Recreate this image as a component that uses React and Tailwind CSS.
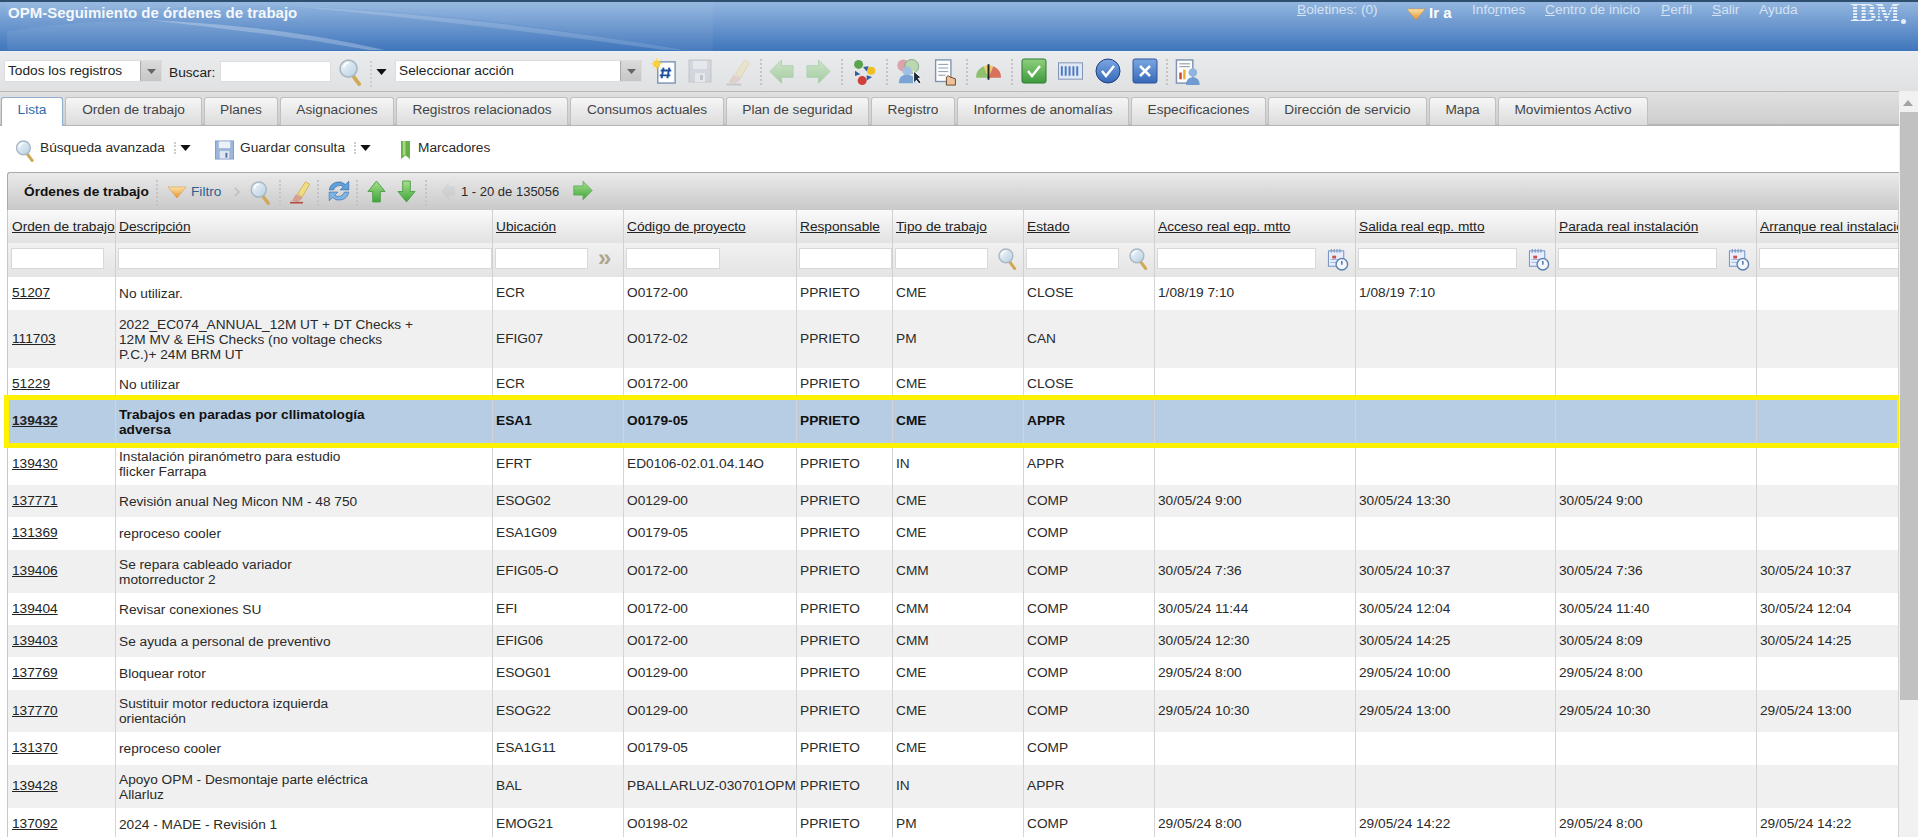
import { Fragment } from 'react'

const gridCols = 'grid-cols-[108px_377px_131px_173px_96px_131px_131px_201px_200px_201px_142px]'

const columns = [
  'Orden de trabajo', 'Descripción', 'Ubicación', 'Código de proyecto', 'Responsable', 'Tipo de trabajo',
  'Estado', 'Acceso real eqp. mtto', 'Salida real eqp. mtto', 'Parada real instalación', 'Arranque real instalación',
]

const rows = [
  { h: 'h-[33px]', id: '51207', desc: ['No utilizar.'], loc: 'ECR', proj: 'O0172-00', type: 'CME', state: 'CLOSE', d1: '1/08/19 7:10', d2: '1/08/19 7:10' },
  { h: 'h-[58px]', id: '111703', alt: true, desc: ['2022_EC074_ANNUAL_12M UT + DT Checks +', '12M MV & EHS Checks (no voltage checks', 'P.C.)+ 24M BRM UT'], loc: 'EFIG07', proj: 'O0172-02', type: 'PM', state: 'CAN' },
  { h: 'h-[32px]', id: '51229', desc: ['No utilizar'], loc: 'ECR', proj: 'O0172-00', type: 'CME', state: 'CLOSE' },
  { h: 'h-[43px]', id: '139432', selected: true, desc: ['Trabajos en paradas por cllimatología', 'adversa'], loc: 'ESA1', proj: 'O0179-05', type: 'CME', state: 'APPR' },
  { h: 'h-[42px]', id: '139430', desc: ['Instalación piranómetro para estudio', 'flicker Farrapa'], loc: 'EFRT', proj: 'ED0106-02.01.04.14O', type: 'IN', state: 'APPR' },
  { h: 'h-[32px]', id: '137771', alt: true, desc: ['Revisión anual Neg Micon NM - 48 750'], loc: 'ESOG02', proj: 'O0129-00', type: 'CME', state: 'COMP', d1: '30/05/24 9:00', d2: '30/05/24 13:30', d3: '30/05/24 9:00' },
  { h: 'h-[33px]', id: '131369', desc: ['reproceso cooler'], loc: 'ESA1G09', proj: 'O0179-05', type: 'CME', state: 'COMP' },
  { h: 'h-[43px]', id: '139406', alt: true, desc: ['Se repara cableado variador', 'motorreductor 2'], loc: 'EFIG05-O', proj: 'O0172-00', type: 'CMM', state: 'COMP', d1: '30/05/24 7:36', d2: '30/05/24 10:37', d3: '30/05/24 7:36', d4: '30/05/24 10:37' },
  { h: 'h-[32px]', id: '139404', desc: ['Revisar conexiones SU'], loc: 'EFI', proj: 'O0172-00', type: 'CMM', state: 'COMP', d1: '30/05/24 11:44', d2: '30/05/24 12:04', d3: '30/05/24 11:40', d4: '30/05/24 12:04' },
  { h: 'h-[32px]', id: '139403', alt: true, desc: ['Se ayuda a personal de preventivo'], loc: 'EFIG06', proj: 'O0172-00', type: 'CMM', state: 'COMP', d1: '30/05/24 12:30', d2: '30/05/24 14:25', d3: '30/05/24 8:09', d4: '30/05/24 14:25' },
  { h: 'h-[33px]', id: '137769', desc: ['Bloquear rotor'], loc: 'ESOG01', proj: 'O0129-00', type: 'CME', state: 'COMP', d1: '29/05/24 8:00', d2: '29/05/24 10:00', d3: '29/05/24 8:00' },
  { h: 'h-[42px]', id: '137770', alt: true, desc: ['Sustituir motor reductora izquierda', 'orientación'], loc: 'ESOG22', proj: 'O0129-00', type: 'CME', state: 'COMP', d1: '29/05/24 10:30', d2: '29/05/24 13:00', d3: '29/05/24 10:30', d4: '29/05/24 13:00' },
  { h: 'h-[33px]', id: '131370', desc: ['reproceso cooler'], loc: 'ESA1G11', proj: 'O0179-05', type: 'CME', state: 'COMP' },
  { h: 'h-[43px]', id: '139428', alt: true, desc: ['Apoyo OPM - Desmontaje parte eléctrica', 'Allarluz'], loc: 'BAL', proj: 'PBALLARLUZ-030701OPM', type: 'IN', state: 'APPR' },
  { h: 'h-[32px]', id: '137092', desc: ['2024 - MADE - Revisión 1'], loc: 'EMOG21', proj: 'O0198-02', type: 'PM', state: 'COMP', d1: '29/05/24 8:00', d2: '29/05/24 14:22', d3: '29/05/24 8:00', d4: '29/05/24 14:22' },
]

const tabs = [
  ['Lista', 'w-[62px]'], ['Orden de trabajo', 'w-[137px]'], ['Planes', 'w-[74px]'], ['Asignaciones', 'w-[114px]'],
  ['Registros relacionados', 'w-[172px]'], ['Consumos actuales', 'w-[154px]'], ['Plan de seguridad', 'w-[143px]'],
  ['Registro', 'w-[84px]'], ['Informes de anomalías', 'w-[172px]'], ['Especificaciones', 'w-[135px]'],
  ['Dirección de servicio', 'w-[159px]'], ['Mapa', 'w-[67px]'], ['Movimientos Activo', 'w-[150px]'],
]

// gradientes compartidos por los iconos
const SvgDefs = () => (
  <svg className="absolute w-0 h-0">
    <defs>
      <linearGradient id="lens" x1="0" y1="0" x2="1" y2="1">
        <stop offset="0" stopColor="#f4f8fb" />
        <stop offset="1" stopColor="#b5cfe2" />
      </linearGradient>
      <linearGradient id="green" x1="0" y1="0" x2="0" y2="1">
        <stop offset="0" stopColor="#a6e08c" />
        <stop offset="1" stopColor="#3fa53a" />
      </linearGradient>
      <linearGradient id="funnel" x1="0" y1="0" x2="0" y2="1">
        <stop offset="0" stopColor="#fbe3a6" />
        <stop offset="1" stopColor="#e5912b" />
      </linearGradient>
      <linearGradient id="checkbox" x1="0" y1="0" x2="0" y2="1">
        <stop offset="0" stopColor="#8fd07e" />
        <stop offset="1" stopColor="#3d9a3c" />
      </linearGradient>
      <linearGradient id="bluebox" x1="0" y1="0" x2="0" y2="1">
        <stop offset="0" stopColor="#7ba7e2" />
        <stop offset="1" stopColor="#3568b8" />
      </linearGradient>
    </defs>
  </svg>
)

const Magnifier = ({ className }) => (
  <svg viewBox="0 0 24 28" className={className}>
    <path d="M15 18 L21 26" stroke="#cfa956" strokeWidth="4" strokeLinecap="round" />
    <circle cx="10" cy="10" r="8.8" fill="url(#lens)" stroke="#a9b8c4" strokeWidth="1.8" />
    <path d="M5 9 a5.5 5.5 0 0 1 5 -5" stroke="#fff" strokeWidth="1.6" fill="none" />
  </svg>
)

const Funnel = ({ className }) => (
  <svg viewBox="0 0 18 12" className={className}>
    <path d="M0 1 H18 L9 12 Z" fill="url(#funnel)" stroke="#d98e30" strokeWidth="0.5" />
  </svg>
)

const Brush = ({ className, faded }) => (
  <svg viewBox="0 0 24 28" className={className} opacity={faded ? 0.3 : 1}>
    <path d="M10 16 L19 2 L24 5 L15 20 Z" fill="#f0dc86" stroke="#cfb04f" />
    <path d="M8 17 L15 21 L10 25 L4 24 Z" fill="#dca08e" stroke="#c07f6f" strokeWidth="0.5" />
    <path d="M1 26.5 H16" stroke={faded ? '#888' : '#b5503f'} strokeWidth="2" />
  </svg>
)

const ArrowLeft = ({ faded }) => (
  <svg viewBox="0 0 26 26" className="w-[25px] h-[25px]" opacity={faded ? 0.38 : 1}>
    <path d="M1 13 L13 1 V7 H25 V19 H13 V25 Z" fill="url(#green)" stroke="#5aa85a" strokeLinejoin="round" />
  </svg>
)

const ArrowRight = ({ className = 'w-[25px] h-[25px]', faded }) => (
  <svg viewBox="0 0 26 26" className={className} opacity={faded ? 0.38 : 1}>
    <path d="M25 13 L13 1 V7 H1 V19 H13 V25 Z" fill="url(#green)" stroke="#5aa85a" strokeLinejoin="round" />
  </svg>
)

const ArrowUp = () => (
  <svg viewBox="0 0 20 24" className="w-[19px] h-[23px]">
    <path d="M10 1 L19 12 H14 V23 H6 V12 H1 Z" fill="url(#green)" stroke="#4d9f48" strokeLinejoin="round" />
  </svg>
)

const ArrowDown = () => (
  <svg viewBox="0 0 20 24" className="w-[19px] h-[23px]">
    <path d="M10 23 L19 12 H14 V1 H6 V12 H1 Z" fill="url(#green)" stroke="#4d9f48" strokeLinejoin="round" />
  </svg>
)

const Caret = () => (
  <svg viewBox="0 0 12 7" className="w-[11px] h-[6px]"><path d="M0 0 H12 L6 7 Z" fill="#111" /></svg>
)

const Dots = () => <span className="block h-[26px] border-l-2 border-dotted border-[#c4c4c4]" />

const SelectArrow = () => (
  <span className="absolute right-0 top-0 w-[21px] h-[20px] bg-gradient-to-b from-[#dadada] to-[#c6c6c6] border-l border-[#aaa] flex items-center justify-center">
    <svg viewBox="0 0 9 5" className="w-[9px] h-[5px]"><path d="M0 0 H9 L4.5 5 Z" fill="#666" /></svg>
  </span>
)

const CalendarClock = () => (
  <svg viewBox="0 0 22 24" className="w-[22px] h-[23px]">
    <rect x="1" y="3" width="16" height="16" fill="#e8eefc" stroke="#6f8fc0" />
    <path d="M4 1 V5 M7 1 V5 M10 1 V5 M13 1 V5" stroke="#6f8fc0" />
    <rect x="5" y="8" width="4" height="3" fill="#d05050" />
    <path d="M3 12 H15 M3 15 H15" stroke="#9db4d8" />
    <circle cx="15" cy="17" r="6" fill="#f4f7fb" stroke="#5f83b3" strokeWidth="1.5" />
    <path d="M15 13.5 V17.5" stroke="#4a6f9f" strokeWidth="1.5" />
  </svg>
)

function MainToolbar() {
  return (
    <div className="h-[40px] bg-gradient-to-b from-[#e9ebed] to-[#dfe1e3] border-t border-[#e9f0f8] relative">
      <div className="absolute left-[4px] top-[8px] w-[158px] h-[22px] bg-white border border-[#ddd] flex items-center pl-[3px] text-[#222]">
        Todos los registros
        <SelectArrow />
      </div>
      <span className="absolute left-[169px] top-[11px] text-[#222]">Buscar:</span>
      <div className="absolute left-[220px] top-[9px] w-[111px] h-[21px] bg-white border border-[#ddd]" />
      <Magnifier className="absolute left-[337px] top-[7px] w-[27px] h-[27px]" />
      <span className="absolute left-[370px] top-[9px] opacity-70"><Dots /></span>
      <span className="absolute left-[376px] top-[17px]"><Caret /></span>
      <div className="absolute left-[395px] top-[8px] w-[247px] h-[22px] bg-white border border-[#ddd] flex items-center pl-[3px] text-[#222]">
        Seleccionar acción
        <SelectArrow />
      </div>

      {/* nueva orden */}
      <svg viewBox="0 0 28 28" className="absolute left-[651px] top-[6px] w-[27px] h-[27px]">
        <rect x="7" y="4" width="18" height="22" fill="#fff" stroke="#7f95b8" strokeWidth="1.5" />
        <path d="M13 10 L11 21 M19 10 L17 21 M10 13 H21 M9 18 H20" stroke="#1f4f9f" strokeWidth="2" />
        <circle cx="6" cy="6" r="3.5" fill="#f9c81f" />
        <path d="M6 0 V12 M0 6 H12 M2 2 L10 10 M10 2 L2 10" stroke="#f9d54a" strokeWidth="1" />
      </svg>
      {/* guardar */}
      <svg viewBox="0 0 24 24" className="absolute left-[688px] top-[7px] w-[24px] h-[24px]" opacity="0.6">
        <rect x="1" y="1" width="22" height="22" fill="#c8ced6" stroke="#a9b2bd" />
        <rect x="5" y="2" width="14" height="8" fill="#e7eaee" />
        <rect x="7" y="14" width="10" height="9" fill="#e7eaee" />
        <rect x="12" y="16" width="3" height="5" fill="#a9b2bd" />
      </svg>
      <Brush faded className="absolute left-[724px] top-[6px] w-[27px] h-[28px]" />
      <span className="absolute left-[760px] top-[7px]"><Dots /></span>
      <span className="absolute left-[769px] top-[7px]"><ArrowLeft faded /></span>
      <span className="absolute left-[806px] top-[7px]"><ArrowRight faded /></span>
      <span className="absolute left-[841px] top-[7px]"><Dots /></span>
      {/* flujo */}
      <svg viewBox="0 0 26 30" className="absolute left-[851px] top-[7px] w-[26px] h-[27px]">
        <circle cx="7" cy="6" r="5" fill="#5aa450" />
        <circle cx="21" cy="13" r="4.5" fill="#f0c020" />
        <circle cx="11" cy="24" r="5" fill="#d0403a" />
        <path d="M12 9 L18 8 L16 14 Z" fill="#2f5f9f" />
        <path d="M3 13 L9 17 L3 19 Z" fill="#2f5f9f" />
        <path d="M22 20 L16 24 L16 18 Z" fill="#2f5f9f" />
      </svg>
      <span className="absolute left-[886px] top-[7px]"><Dots /></span>
      {/* personas */}
      <svg viewBox="0 0 28 30" className="absolute left-[895px] top-[6px] w-[26px] h-[28px]">
        <circle cx="9" cy="8" r="6.5" fill="#dba3aa" />
        <circle cx="18" cy="9" r="7.5" fill="#bcd6b0" stroke="#7fa88a" />
        <circle cx="13" cy="14" r="5" fill="#9fc0e4" />
        <path d="M4 27 Q4 18 13 18 Q22 18 22 27 Z" fill="#7aa3d6" />
        <path d="M20 14 L20 27 L23 24 L26 28 L28 26 L25 22 L28 21 Z" fill="#1f2a3a" stroke="#fff" />
      </svg>
      {/* documento */}
      <svg viewBox="0 0 24 30" className="absolute left-[934px] top-[7px] w-[23px] h-[27px]">
        <rect x="1" y="1" width="17" height="24" fill="#fdfdfd" stroke="#7f93b0" strokeWidth="1.5" />
        <path d="M4 6 H15 M4 10 H15 M4 14 H15 M4 18 H12" stroke="#7f8fa6" />
        <path d="M13 29 V20 Q15 17 17 20 L23 22 V29 Z" fill="#f0c09a" stroke="#5f3f20" />
      </svg>
      <span className="absolute left-[966px] top-[7px]"><Dots /></span>
      {/* indicador */}
      <svg viewBox="0 0 28 18" className="absolute left-[975px] top-[10px] w-[27px] h-[18px]">
        <path d="M1 16 A13 13 0 0 1 9 4 L14 16 Z" fill="#8fc06f" />
        <path d="M9 4 A13 13 0 0 1 19 4 L14 16 Z" fill="#eccb6a" />
        <path d="M19 4 A13 13 0 0 1 27 16 L14 16 Z" fill="#d8705a" />
        <path d="M14 2 V18" stroke="#222" strokeWidth="2" />
      </svg>
      <span className="absolute left-[1011px] top-[7px]"><Dots /></span>
      <svg viewBox="0 0 26 26" className="absolute left-[1021px] top-[6px] w-[26px] h-[26px]">
        <rect x="1" y="1" width="24" height="24" rx="2" fill="url(#checkbox)" stroke="#2f7a32" />
        <path d="M7 13 L11 18 L19 8" stroke="#fff" strokeWidth="2.5" fill="none" />
      </svg>
      <svg viewBox="0 0 26 18" className="absolute left-[1058px] top-[10px] w-[25px] h-[18px]">
        <rect x="0.5" y="0.5" width="25" height="17" fill="#dfe7f4" stroke="#7f93b3" />
        <path d="M4 4 V14 M8 4 V14 M12 4 V14 M16 4 V14 M20 4 V14" stroke="#4a78c2" strokeWidth="2" />
      </svg>
      <svg viewBox="0 0 26 26" className="absolute left-[1095px] top-[6px] w-[26px] h-[26px]">
        <circle cx="13" cy="13" r="12" fill="url(#bluebox)" stroke="#1f3f7f" />
        <path d="M7 13 L11 18 L19 8" stroke="#fff" strokeWidth="2.5" fill="none" />
      </svg>
      <svg viewBox="0 0 26 26" className="absolute left-[1132px] top-[6px] w-[26px] h-[26px]">
        <rect x="1" y="1" width="24" height="24" rx="2" fill="url(#bluebox)" stroke="#2f559f" />
        <path d="M8 8 L18 18 M18 8 L8 18" stroke="#fff" strokeWidth="2.5" />
      </svg>
      <span className="absolute left-[1166px] top-[7px]"><Dots /></span>
      <svg viewBox="0 0 26 28" className="absolute left-[1175px] top-[7px] w-[26px] h-[27px]">
        <rect x="1" y="1" width="17" height="24" fill="#fdfdfd" stroke="#7f93b0" strokeWidth="1.5" />
        <path d="M4 5 H15 M4 8 H15" stroke="#7f8fa6" />
        <rect x="4" y="14" width="2.5" height="7" fill="#d0402a" />
        <rect x="8" y="11" width="2.5" height="10" fill="#e9b030" />
        <circle cx="18" cy="14" r="4.5" fill="#8fb5de" />
        <path d="M11 27 Q11 19 18 19 Q25 19 25 27 Z" fill="#6f9bd0" />
      </svg>
    </div>
  )
}

function TabBar() {
  return (
    <div className="h-[35px] pl-[1px] pt-[5px] flex gap-[2px] bg-gradient-to-b from-[#e0e0e0] to-[#cecece] border-t border-[#b8b8b8] border-b-2 border-b-[#b5b5b5]">
      {tabs.map(([label, width], i) => (
        <div
          key={label}
          className={`${width} h-[28px] pb-[2px] shrink-0 flex items-center justify-center rounded-t-[3px] border border-b-0 ${
            i === 0
              ? 'bg-white border-[#8fb0d0] text-[#2f6aa8] h-[30px] pb-[4px]'
              : 'bg-gradient-to-b from-[#f6f6f6] to-[#dcdcdc] border-[#c0c0c0] text-[#444]'
          }`}
        >
          {label}
        </div>
      ))}
    </div>
  )
}

function SearchRow() {
  return (
    <div className="h-[46px] bg-white relative text-[#2a2a2a]">
      <Magnifier className="absolute left-[15px] top-[14px] w-[20px] h-[22px]" />
      <span className="absolute left-[40px] top-[12px]">Búsqueda avanzada</span>
      <span className="absolute left-[174px] top-[16px] h-[12px] border-l-2 border-dotted border-[#ccc]" />
      <span className="absolute left-[180px] top-[19px]"><Caret /></span>
      <svg viewBox="0 0 20 20" className="absolute left-[215px] top-[14px] w-[19px] h-[20px]">
        <rect x="0.5" y="0.5" width="19" height="19" fill="#9db7da" stroke="#7f9cc8" />
        <rect x="4" y="1" width="12" height="7" fill="#eef2f8" />
        <rect x="5" y="11" width="10" height="8" fill="#dfe6f0" />
        <rect x="11" y="13" width="2" height="5" fill="#4f6f9f" />
      </svg>
      <span className="absolute left-[240px] top-[12px]">Guardar consulta</span>
      <span className="absolute left-[354px] top-[16px] h-[12px] border-l-2 border-dotted border-[#ccc]" />
      <span className="absolute left-[360px] top-[19px]"><Caret /></span>
      <svg viewBox="0 0 10 20" className="absolute left-[401px] top-[14px] w-[9px] h-[20px]">
        <path d="M0 0 H10 V20 L5 16 L0 20 Z" fill="#66b048" />
        <path d="M2 0 H5 V16 H2 Z" fill="#a6d680" />
      </svg>
      <span className="absolute left-[418px] top-[12px]">Marcadores</span>
    </div>
  )
}

function TableToolbar() {
  return (
    <div className="h-[38px] ml-[7px] relative rounded-tl-[3px] border-t border-l border-[#aaa] bg-gradient-to-b from-[#eaeaea] to-[#c9c9c9] text-[#2a2a2a]">
      <span className="absolute left-[16px] top-[9px] font-bold text-[#111]">Órdenes de trabajo</span>
      <span className="absolute left-[148px] top-[7px]"><Dots /></span>
      <Funnel className="absolute left-[160px] top-[13px] w-[18px] h-[12px]" />
      <span className="absolute left-[183px] top-[9px] text-[#2f5f8f]">Filtro</span>
      <svg viewBox="0 0 6 10" className="absolute left-[226px] top-[14px] w-[6px] h-[10px]"><path d="M1 1 L5 5 L1 9" stroke="#bbb" strokeWidth="1.5" fill="none" /></svg>
      <Magnifier className="absolute left-[242px] top-[8px] w-[21px] h-[24px]" />
      <span className="absolute left-[271px] top-[7px]"><Dots /></span>
      <Brush className="absolute left-[281px] top-[7px] w-[21px] h-[24px]" />
      <span className="absolute left-[309px] top-[7px]"><Dots /></span>
      <svg viewBox="0 0 22 22" className="absolute left-[319px] top-[6px] w-[24px] h-[24px]">
        <path d="M2 10 A9 9 0 0 1 17 5 L20 2 V10 H12 L15 7 A6 6 0 0 0 6 10 Z" fill="#5f9fdc" stroke="#28609f" strokeWidth="0.5" />
        <path d="M20 12 A9 9 0 0 1 5 17 L2 20 V12 H10 L7 15 A6 6 0 0 0 16 12 Z" fill="#7fb5e6" stroke="#28609f" strokeWidth="0.5" />
      </svg>
      <span className="absolute left-[348px] top-[7px]"><Dots /></span>
      <span className="absolute left-[359px] top-[7px]"><ArrowUp /></span>
      <span className="absolute left-[389px] top-[7px]"><ArrowDown /></span>
      <span className="absolute left-[417px] top-[7px]"><Dots /></span>
      <svg viewBox="0 0 18 22" className="absolute left-[432px] top-[8px] w-[16px] h-[20px]" opacity="0.1">
        <path d="M1 11 L10 1 V6 H17 V16 H10 V21 Z" fill="#888" />
      </svg>
      <span className="absolute left-[453px] top-[9px] text-[13px]">1 - 20 de 135056</span>
      <ArrowRight className="absolute left-[565px] top-[7px] w-[20px] h-[21px]" />
    </div>
  )
}

function TableHead() {
  return (
    <>
      <div className={`grid ${gridCols} h-[33px] bg-gradient-to-b from-[#fafafa] to-[#e2e2e2]`}>
        {columns.map((c, i) => (
          <div key={c} className={`border-r border-[#d0d0d0] pt-[7px] overflow-hidden whitespace-nowrap ${i === 0 ? 'pl-[4px]' : 'pl-[3px]'}`}>
            <span className="underline text-[#222]">{c}</span>
          </div>
        ))}
      </div>
      <div className={`grid ${gridCols} h-[34px] bg-gradient-to-b from-[#f1f1f1] to-[#e4e4e4]`}>
        <FilterCell inputW="w-[93px] ml-[1px]" />
        <FilterCell inputW="w-[374px]" />
        <FilterCell inputW="w-[93px]" extra={<span className="text-[#b0a58f] font-bold text-[24px] leading-[20px] ml-[10px]">»</span>} />
        <FilterCell inputW="w-[94px]" />
        <FilterCell inputW="w-[93px]" />
        <FilterCell inputW="w-[93px]" extra={<Magnifier className="w-[19px] h-[22px] ml-[10px]" />} />
        <FilterCell inputW="w-[93px]" extra={<Magnifier className="w-[19px] h-[22px] ml-[10px]" />} />
        <FilterCell inputW="w-[159px]" extra={<span className="ml-[11px]"><CalendarClock /></span>} />
        <FilterCell inputW="w-[159px]" extra={<span className="ml-[11px]"><CalendarClock /></span>} />
        <FilterCell inputW="w-[159px]" extra={<span className="ml-[11px]"><CalendarClock /></span>} />
        <FilterCell inputW="w-[140px]" />
      </div>
    </>
  )
}

function FilterCell({ inputW, extra }) {
  return (
    <div className="border-r border-[#d0d0d0] pl-[2px] pt-[5px] flex items-start overflow-hidden">
      <div className={`${inputW} h-[21px] shrink-0 bg-white border border-[#d8d8d8]`} />
      {extra}
    </div>
  )
}

function Row({ row }) {
  const bg = row.selected ? 'bg-[#b7cde4]' : row.alt ? 'bg-[#f0f0f0]' : 'bg-white'
  const weight = row.selected ? 'font-bold text-[#111]' : 'text-[#2a2a2a]'
  const cell = 'border-r border-[#d4d4d4] pl-[3px] flex items-center overflow-hidden whitespace-nowrap'
  const cells = [row.loc, row.proj, 'PPRIETO', row.type, row.state, row.d1, row.d2, row.d3, row.d4]
  return (
    <div className={`grid ${gridCols} ${row.h} ${bg} ${weight}`}>
      <div className={`${cell} pl-[4px]`}><span className="underline text-[#222]">{row.id}</span></div>
      <div className={`${cell} leading-[15px]`}>
        <div>
          {row.desc.map((line, i) => (
            <Fragment key={i}>{line}<br /></Fragment>
          ))}
        </div>
      </div>
      {cells.map((v, i) => (
        <div key={i} className={cell}>{v}</div>
      ))}
    </div>
  )
}

export default function App() {
  return (
    <div className="relative w-[1918px] h-[837px] overflow-hidden bg-white [font-family:Liberation_Sans,sans-serif] text-[13.7px]">
      <SvgDefs />
      {/* cabecera */}
      <div className="relative h-[51px] border-t-2 border-[#2f4f70] bg-gradient-to-b from-[#93b6df] to-[#3f75bb] overflow-hidden">
        <svg viewBox="0 0 720 50" className="absolute left-0 top-0 w-[720px] h-[49px]">
          <path d="M0 0 H720 V50 H690 Q480 10 290 4 Q200 2 0 14 Z" fill="#ffffff" opacity="0.05" />
          <path d="M0 30 Q120 10 250 30 T385 49 H0 Z" fill="#ffffff" opacity="0.07" />
          <path d="M140 18 Q280 24 385 49 L370 49 Q260 30 140 18 Z" fill="#ffffff" opacity="0.28" />
          <path d="M290 4 Q500 16 690 49 L670 49 Q480 22 290 4 Z" fill="#ffffff" opacity="0.16" />
        </svg>
        <span className="absolute left-[8px] top-0 font-bold text-[15px] text-[#f4f7fb]">OPM-Seguimiento de órdenes de trabajo</span>
        <div className="text-[#d4e2f3]">
          <span className="absolute left-[1297px] top-[-2px]"><u>B</u>oletines: (0)</span>
          <Funnel className="absolute left-[1406px] top-[6px] w-[20px] h-[12px]" />
          <span className="absolute left-[1429px] top-0 font-bold text-[15px] text-white">Ir a</span>
          <span className="absolute left-[1472px] top-[-2px]">Info<u>r</u>mes</span>
          <span className="absolute left-[1545px] top-[-2px]"><u>C</u>entro de inicio</span>
          <span className="absolute left-[1661px] top-[-2px]"><u>P</u>erfil</span>
          <span className="absolute left-[1712px] top-[-2px]"><u>S</u>alir</span>
          <span className="absolute left-[1759px] top-[-2px]">Ayuda</span>
        </div>
        <span className="absolute left-[1850px] top-[-1px] w-[52px] h-[24px] overflow-hidden [font-family:Liberation_Serif,serif] font-bold text-[26px] leading-[24px] tracking-[-1px] text-transparent bg-clip-text bg-[repeating-linear-gradient(180deg,#e6eef8_0_2px,transparent_2px_3px)]">IBM</span>
        <span className="absolute left-[1901px] top-[17px] w-[5px] h-[5px] rounded-full bg-[#e6eef8]" />
      </div>

      <MainToolbar />

      <div className="absolute left-0 top-[91px] w-[1899px]">
        <TabBar />
        <SearchRow />
        <TableToolbar />
        <div className="ml-[7px] border-l border-[#c8c8c8] overflow-hidden">
          <TableHead />
          {rows.map((r) => <Row key={r.id} row={r} />)}
        </div>
      </div>

      {/* fila seleccionada */}
      <div className="absolute left-[4px] top-[395px] w-[1898px] h-[53px] border-[5px] border-[#fff200] pointer-events-none" />

      {/* barra de desplazamiento */}
      <div className="absolute left-[1899px] top-[91px] w-[19px] h-[746px] bg-[#f1f1f1]">
        <svg viewBox="0 0 10 6" className="absolute left-[4px] top-[9px] w-[10px] h-[6px]"><path d="M5 0 L10 6 H0 Z" fill="#a3a3a3" /></svg>
        <div className="absolute left-[1px] right-0 top-[21px] h-[588px] bg-[#c1c1c1]" />
      </div>
    </div>
  )
}
